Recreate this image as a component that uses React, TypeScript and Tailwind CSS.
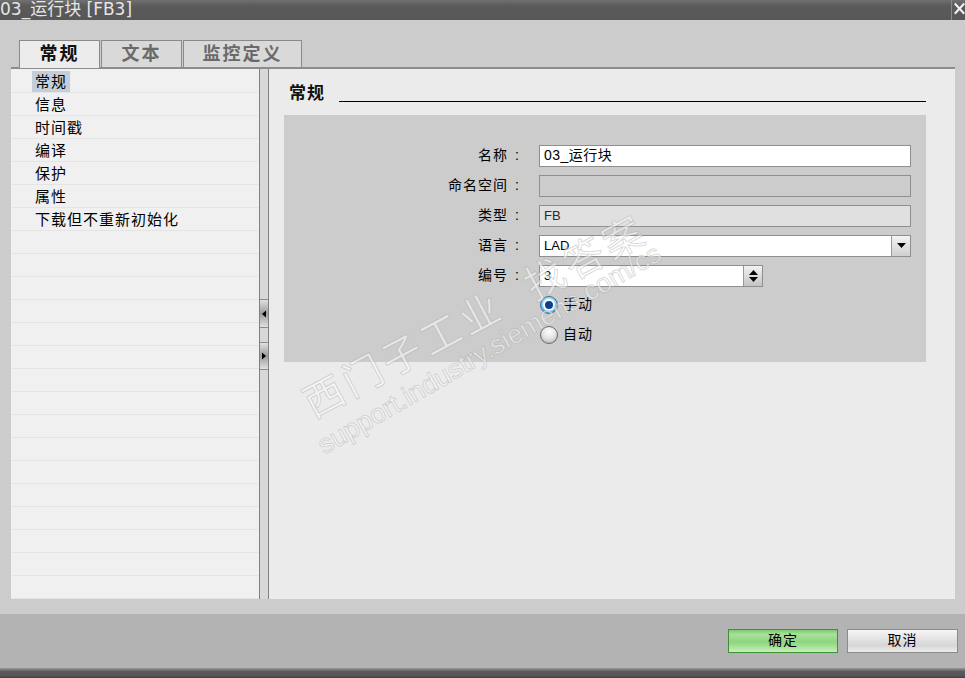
import React from "react";

const CJK = "font-['Liberation_Sans','Noto_Sans_CJK_SC',sans-serif]";

function Field({ label, children }: { label: string; children: React.ReactNode }) {
  return (
    <div className="flex items-center h-[22px]">
      <div className="w-[240px] flex justify-end items-center text-[14px] tracking-[1px] text-black pr-[1px]">
        <span>{label}</span>
        <span className="ml-[7px] w-[8px] text-left">:</span>
      </div>
      <div className="ml-[15px]">{children}</div>
    </div>
  );
}

function Radio({ checked, label }: { checked: boolean; label: string }) {
  return (
    <div className="flex items-center h-[18px]">
      {checked ? (
        <div className="w-[18px] h-[18px] rounded-full border border-[#4a6a88] bg-[radial-gradient(circle_at_50%_35%,#e8f8ff_0%,#8fd8ff_45%,#1f95e0_100%)] flex items-center justify-center">
          <div className="w-[8px] h-[8px] rounded-full bg-[#0b3f8f] ring-2 ring-white" />
        </div>
      ) : (
        <div className="w-[18px] h-[18px] rounded-full border border-[#6a6a6a] bg-[radial-gradient(circle_at_50%_30%,#ffffff_0%,#e2e2e2_50%,#a9a9a9_100%)]" />
      )}
      <span className="ml-[5px] text-[14px] tracking-[1px] text-black">{label}</span>
    </div>
  );
}

export default function App() {
  const items = ["常规", "信息", "时间戳", "编译", "保护", "属性", "下载但不重新初始化"];
  const rows = Array.from({ length: 23 }, (_, i) => items[i] ?? "");

  return (
    <div className={`relative w-[965px] h-[678px] overflow-hidden flex flex-col bg-[#cccccc] ${CJK}`}>
      {/* Title bar */}
      <div className="h-[20px] flex items-stretch bg-[linear-gradient(#707070,#5a5a5a_30%,#575757)]">
        <div className="flex-1 flex items-center overflow-hidden">
          <span className="font-['DejaVu_Sans','Noto_Sans_CJK_SC',sans-serif] text-[17px] leading-[20px] text-[#e6e6e6] -mt-[2px]">
            03_运行块 [FB3]
          </span>
        </div>
        <div className="w-[14px] flex items-start border-l border-[#8a8a8a] pl-[2px]">
          <svg width="14" height="18" viewBox="0 0 14 18">
            <path d="M1 2 L13 15 M13 2 L1 15" stroke="#f2f2f2" strokeWidth="2.6" />
          </svg>
        </div>
      </div>

      {/* Main area */}
      <div className="flex-1 flex flex-col pl-[11px] pr-[10px] pt-[20px] pb-[15px]">
        {/* Tabs */}
        <div className="h-[27px] flex items-end pl-[8px] gap-[1px] font-bold text-[18px] leading-none">
          <div className="w-[81px] h-[28px] -mb-[1px] z-10 bg-[#ececec] border border-b-0 border-[#8a8a8a] flex items-center justify-center text-[#111] tracking-[2px]">
            常规
          </div>
          <div className="w-[81px] h-[27px] bg-[#d9d9d9] border border-b-0 border-[#8a8a8a] flex items-center justify-center text-[#6a6a6a] tracking-[2px]">
            文本
          </div>
          <div className="w-[119px] h-[27px] bg-[#d9d9d9] border border-b-0 border-[#8a8a8a] flex items-center justify-center text-[#6a6a6a] tracking-[2px]">
            监控定义
          </div>
        </div>

        {/* Panel */}
        <div className="flex-1 flex border-t-2 border-[#8c8c8c] min-h-0">
          {/* Left list */}
          <div className="w-[248px] bg-[#f0f0f0] flex flex-col overflow-hidden pt-[1px]">
            {rows.map((t, i) => (
              <div key={i} className="h-[23px] shrink-0 border-b border-[#e4e4e4] flex items-center pl-[21px]">
                {t && (
                  <span
                    className={`text-[15px] leading-[21px] tracking-[1px] text-black px-[3px] mt-[2px] ${
                      i === 0 ? "bg-[#c4ced8]" : ""
                    }`}
                  >
                    {t}
                  </span>
                )}
              </div>
            ))}
          </div>

          {/* Splitter */}
          <div className="w-[10px] bg-[#d8d8d8] border-l border-r border-[#808080] flex flex-col justify-center gap-[14px] pt-[2px]">
            <div className="h-[29px] border-y border-[#8a8a8a] bg-[linear-gradient(#e0e0e0,#9c9c9c_50%,#e0e0e0)] flex items-center justify-center">
              <svg width="6" height="8" viewBox="0 0 6 8">
                <path d="M1 4 L5 0.5 L5 7.5 Z" fill="#000" />
              </svg>
            </div>
            <div className="h-[28px] border-y border-[#8a8a8a] bg-[linear-gradient(#e0e0e0,#9c9c9c_50%,#e0e0e0)] flex items-center justify-center">
              <svg width="6" height="8" viewBox="0 0 6 8">
                <path d="M5 4 L1 0.5 L1 7.5 Z" fill="#000" />
              </svg>
            </div>
          </div>

          {/* Right panel */}
          <div className="flex-1 bg-[#ebebeb] pl-[15px] pr-[29px] pt-[14px]">
            <div className="h-[20px] flex items-end">
              <span className="pl-[5px] font-bold text-[17px] leading-none tracking-[1px] text-[#111] pb-[1px]">常规</span>
              <div className="flex-1 ml-[14px] border-b border-black mb-[1px]" />
            </div>

            <div className="mt-[12px] h-[247px] bg-[#cccccc] pt-[30px] flex flex-col gap-[8px]">
              <Field label="名称">
                <div className="w-[372px] h-[22px] bg-white border border-[#8f8f8f] flex items-center px-[4px] text-[14px] tracking-[0.5px] text-black">
                  03_运行块
                </div>
              </Field>
              <Field label="命名空间">
                <div className="w-[372px] h-[22px] bg-[#cccccc] border border-[#8f8f8f]" />
              </Field>
              <Field label="类型">
                <div className="w-[372px] h-[22px] bg-[#e0e0e0] border border-[#8f8f8f] flex items-center px-[4px] text-[13px] text-[#2a2a2a]">
                  FB
                </div>
              </Field>
              <Field label="语言">
                <div className="w-[372px] h-[22px] bg-white border border-[#8f8f8f] flex items-stretch text-[13px] text-black">
                  <div className="flex-1 flex items-center px-[4px]">LAD</div>
                  <div className="w-[19px] border-l border-[#9a9a9a] bg-[linear-gradient(#f4f4f4,#cfcfcf)] flex items-center justify-center">
                    <svg width="9" height="5" viewBox="0 0 9 5">
                      <path d="M0 0 L9 0 L4.5 5 Z" fill="#000" />
                    </svg>
                  </div>
                </div>
              </Field>
              <Field label="编号">
                <div className="w-[224px] h-[22px] bg-white border border-[#8f8f8f] flex items-stretch text-[13px] text-black">
                  <div className="flex-1 flex items-center px-[4px]">3</div>
                  <div className="w-[19px] border-l border-[#9a9a9a] bg-[linear-gradient(#f2f2f2,#c4c4c4)] flex flex-col items-center justify-center gap-[2px]">
                    <svg width="9" height="5" viewBox="0 0 9 5">
                      <path d="M0 5 L9 5 L4.5 0 Z" fill="#000" />
                    </svg>
                    <svg width="9" height="5" viewBox="0 0 9 5">
                      <path d="M0 0 L9 0 L4.5 5 Z" fill="#000" />
                    </svg>
                  </div>
                </div>
              </Field>
              <div className="pl-[256px] pt-[1px] flex flex-col gap-[12px]">
                <Radio checked label="手动" />
                <Radio checked={false} label="自动" />
              </div>
            </div>
          </div>
        </div>
      </div>

      {/* Bottom button bar */}
      <div className="h-[55px] bg-[#b3b3b3] flex items-center justify-end pr-[7px] gap-[9px]">
        <button className="w-[110px] h-[24px] border border-[#3f8f36] bg-[linear-gradient(#7ccb6c,#a9e19b_20%,#8ed47f_55%,#c6f0ba)] text-[14px] tracking-[1px] text-black">
          确定
        </button>
        <button className="w-[111px] h-[24px] border border-[#8a8a8a] bg-[linear-gradient(#f6f6f6,#e8e8e8_30%,#d6d6d6_70%,#ececec)] text-[14px] tracking-[1px] text-black">
          取消
        </button>
      </div>
      <div className="h-[10px] bg-[linear-gradient(#9a9a9a,#5a5a5a_35%,#555555_80%,#3a3a3a)]" />

      {/* Watermark */}
      <div className="absolute left-[316px] top-[384px] origin-bottom-left rotate-[-28deg] whitespace-nowrap text-[40px] leading-none tracking-[4px] text-[rgba(255,255,255,0.55)] [-webkit-text-stroke:1px_rgba(150,150,150,0.35)] pointer-events-none">
        西门子工业&nbsp;&nbsp;找答案
      </div>
      <div className="absolute left-[327px] top-[432px] origin-bottom-left rotate-[-30deg] whitespace-nowrap font-['Liberation_Sans',sans-serif] text-[27px] leading-none text-[rgba(255,255,255,0.55)] [-webkit-text-stroke:1px_rgba(150,150,150,0.35)] pointer-events-none">
        support.industry.siemens.com/cs
      </div>
    </div>
  );
}
